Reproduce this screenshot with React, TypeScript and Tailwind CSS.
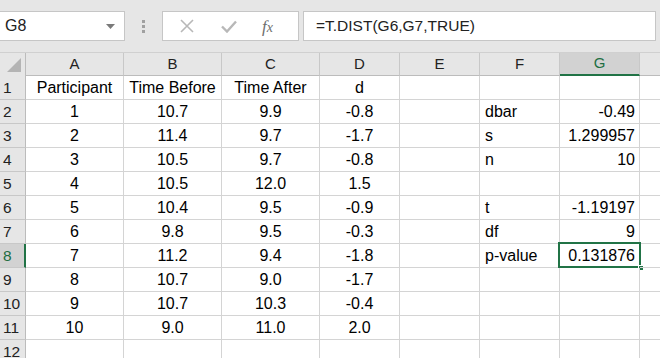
import React from 'react'

const cols = ['A', 'B', 'C', 'D', 'E', 'F', 'G', 'H']
const widths = ['w-[98px]', 'w-[98px]', 'w-[98px]', 'w-[80px]', 'w-[80px]', 'w-[80px]', 'w-[80px]', 'w-[80px]']
const align = ['text-center', 'text-center', 'text-center', 'text-center', 'text-center', 'text-left pl-[5px]', 'text-right pr-[4px]', 'text-left']

const rows: string[][] = [
  ['Participant', 'Time Before', 'Time After', 'd', '', '', ''],
  ['1', '10.7', '9.9', '-0.8', '', 'dbar', '-0.49'],
  ['2', '11.4', '9.7', '-1.7', '', 's', '1.299957'],
  ['3', '10.5', '9.7', '-0.8', '', 'n', '10'],
  ['4', '10.5', '12.0', '1.5', '', '', ''],
  ['5', '10.4', '9.5', '-0.9', '', 't', '-1.19197'],
  ['6', '9.8', '9.5', '-0.3', '', 'df', '9'],
  ['7', '11.2', '9.4', '-1.8', '', 'p-value', '0.131876'],
  ['8', '10.7', '9.0', '-1.7', '', '', ''],
  ['9', '10.7', '10.3', '-0.4', '', '', ''],
  ['10', '9.0', '11.0', '2.0', '', '', ''],
  ['', '', '', '', '', '', ''],
]

const font = { fontFamily: '"Liberation Sans", Arial, sans-serif' }

export default function App() {
  return (
    <div className="w-[660px] h-[358px] overflow-hidden bg-white text-[#000]" style={font}>
      {/* Formula bar */}
      <div className="h-[52px] bg-[#e6e6e6] flex items-start pt-[11px]">
        <div className="w-[125px] h-[30px] bg-white border border-l-0 border-[#c6c6c6] flex items-center pl-[5px] pr-[9px] text-[16px] text-[#222]">
          <span className="flex-1">G8</span>
          <svg width="9" height="5" viewBox="0 0 9 5"><path d="M0 0h9L4.5 5z" fill="#7a7a7a" /></svg>
        </div>
        <div className="w-[37px] h-[30px] flex flex-col items-center justify-center gap-[2px]">
          <span className="w-[3px] h-[3px] bg-[#a0a0a0]" />
          <span className="w-[3px] h-[3px] bg-[#a0a0a0]" />
          <span className="w-[3px] h-[3px] bg-[#a0a0a0]" />
        </div>
        <div className="w-[137px] h-[30px] bg-white border border-[#c6c6c6] flex items-center">
          <svg className="ml-[17px]" width="14" height="14" viewBox="0 0 14 14">
            <path d="M1 1L13 13M13 1L1 13" stroke="#b8b8b8" strokeWidth="1.6" />
          </svg>
          <svg className="ml-[27px]" width="16" height="13" viewBox="0 0 16 13">
            <path d="M1 6.5L6 11.5L15 1.5" stroke="#b8b8b8" strokeWidth="2.4" fill="none" />
          </svg>
          <span className="ml-[25px] text-[17px] italic text-[#6e6e6e] leading-none" style={{ fontFamily: '"Liberation Serif", serif' }}>
            f<span className="text-[14px]">x</span>
          </span>
        </div>
        <div className="ml-[4px] w-[353px] h-[30px] bg-white border border-[#c6c6c6] flex items-center pl-[12px] text-[15.5px] text-[#222]">
          =T.DIST(G6,G7,TRUE)
        </div>
      </div>

      {/* Column headers */}
      <div className="flex h-[24px] bg-[#e6e6e6] border-t border-[#d0d0d0]">
        <div className="w-[26px] shrink-0 h-full border-r border-[#bcbcbc] flex items-end justify-end pr-[4px] pb-[4px]">
          <svg width="14" height="14" viewBox="0 0 14 14"><path d="M14 0V14H0z" fill="#b4b4b4" /></svg>
        </div>
        {cols.map((c, i) => (
          <div
            key={c}
            className={`${widths[i]} shrink-0 h-full border-r border-[#c8c8c8] flex items-center justify-center text-[15px] ${
              c === 'G' ? 'bg-[#d2d2d2] text-[#1e6e42] border-b-2 border-b-[#217346]' : 'text-[#222] border-b border-b-[#bcbcbc]'
            }`}
          >
            {c === 'H' ? '' : c}
          </div>
        ))}
      </div>

      {/* Rows */}
      {rows.map((r, ri) => {
        const n = ri + 1
        const sel = n === 8
        return (
          <div key={n} className="flex h-[24px]">
            <div
              className={`w-[26px] shrink-0 h-full flex items-center pl-[3px] text-[15.5px] border-b border-[#c8c8c8] ${
                sel ? 'bg-[#d2d2d2] text-[#1e6e42] border-r-2 border-r-[#217346]' : 'bg-[#e6e6e6] text-[#222] border-r border-r-[#bcbcbc]'
              }`}
            >
              {n}
            </div>
            {cols.map((c, ci) => (
              <div
                key={c}
                className={`${widths[ci]} shrink-0 h-full border-r border-b border-[#d4d4d4] text-[16px] leading-[24px] whitespace-nowrap ${align[ci]} relative`}
              >
                {r[ci] ?? ''}
                {sel && c === 'G' && (
                  <div className="absolute left-[-2px] top-[-2px] w-[83px] h-[26px] border-2 border-[#217346]">
                    <div className="absolute right-[-5px] bottom-[-5px] w-[6px] h-[6px] bg-[#217346] border border-white" />
                  </div>
                )}
              </div>
            ))}
          </div>
        )
      })}
    </div>
  )
}
